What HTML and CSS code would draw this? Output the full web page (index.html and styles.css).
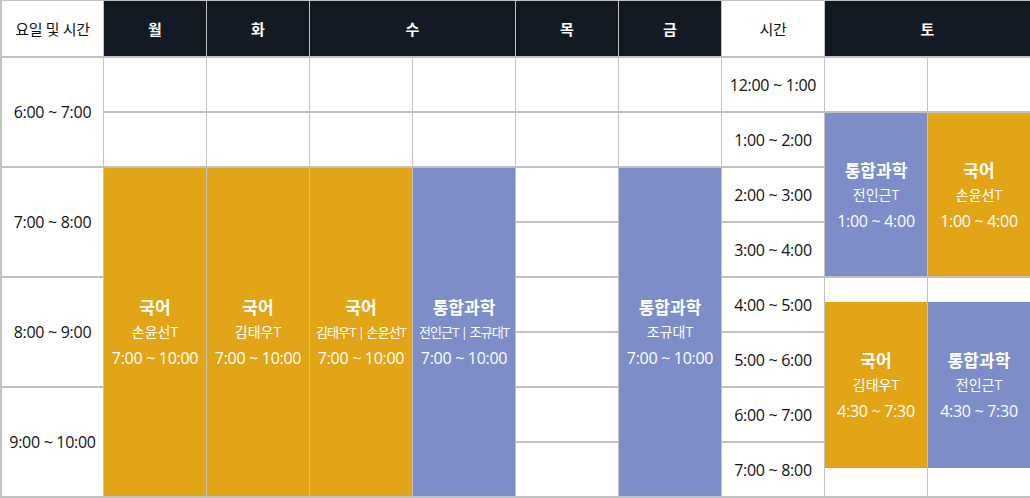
FILE: index.html
```html
<!DOCTYPE html>
<html lang="ko">
<head>
    <meta charset="UTF-8">
    <meta name="viewport" content="width=device-width, initial-scale=1.0">
    <title>시간표</title>
    <link rel="stylesheet" href="styles.css">
</head>
<body>

    <div class="horario">
        <!-- cabecera -->
        <div class="celda etiqueta">요일 및 시간</div>
        <div class="celda dia">월</div>
        <div class="celda dia">화</div>
        <div class="celda dia ancho">수</div>
        <div class="celda dia">목</div>
        <div class="celda dia">금</div>
        <div class="celda etiqueta">시간</div>
        <div class="celda dia ancho">토</div>

        <!-- 12:00 -->
        <div class="celda hora alto2">6:00 ~ 7:00</div>
        <div class="celda"></div>
        <div class="celda"></div>
        <div class="celda"></div>
        <div class="celda"></div>
        <div class="celda"></div>
        <div class="celda"></div>
        <div class="celda hora">12:00 ~ 1:00</div>
        <div class="celda"></div>
        <div class="celda"></div>

        <!-- 1:00 -->
        <div class="celda"></div>
        <div class="celda"></div>
        <div class="celda"></div>
        <div class="celda"></div>
        <div class="celda"></div>
        <div class="celda"></div>
        <div class="celda hora">1:00 ~ 2:00</div>
        <div class="celda clase azul alto3">
            <span class="materia">통합과학</span>
            <span class="profe">전인근T</span>
            <span class="tiempo">1:00 ~ 4:00</span>
        </div>
        <div class="celda clase naranja alto3">
            <span class="materia">국어</span>
            <span class="profe">손윤선T</span>
            <span class="tiempo">1:00 ~ 4:00</span>
        </div>

        <!-- 2:00 -->
        <div class="celda hora alto2">7:00 ~ 8:00</div>
        <div class="celda clase naranja alto6">
            <span class="materia">국어</span>
            <span class="profe">손윤선T</span>
            <span class="tiempo">7:00 ~ 10:00</span>
        </div>
        <div class="celda clase naranja alto6">
            <span class="materia">국어</span>
            <span class="profe">김태우T</span>
            <span class="tiempo">7:00 ~ 10:00</span>
        </div>
        <div class="celda clase naranja alto6">
            <span class="materia">국어</span>
            <span class="profe apretado">김태우T | 손윤선T</span>
            <span class="tiempo">7:00 ~ 10:00</span>
        </div>
        <div class="celda clase azul alto6">
            <span class="materia">통합과학</span>
            <span class="profe apretado">전인근T | 조규대T</span>
            <span class="tiempo">7:00 ~ 10:00</span>
        </div>
        <div class="celda"></div>
        <div class="celda clase azul alto6">
            <span class="materia">통합과학</span>
            <span class="profe">조규대T</span>
            <span class="tiempo">7:00 ~ 10:00</span>
        </div>
        <div class="celda hora">2:00 ~ 3:00</div>

        <!-- 3:00 -->
        <div class="celda"></div>
        <div class="celda hora">3:00 ~ 4:00</div>

        <!-- 4:00 -->
        <div class="celda hora alto2">8:00 ~ 9:00</div>
        <div class="celda"></div>
        <div class="celda hora">4:00 ~ 5:00</div>
        <div class="celda medio alto4">
            <div class="clase naranja">
                <span class="materia">국어</span>
                <span class="profe">김태우T</span>
                <span class="tiempo">4:30 ~ 7:30</span>
            </div>
        </div>
        <div class="celda medio alto4">
            <div class="clase azul">
                <span class="materia">통합과학</span>
                <span class="profe">전인근T</span>
                <span class="tiempo">4:30 ~ 7:30</span>
            </div>
        </div>

        <!-- 5:00 -->
        <div class="celda"></div>
        <div class="celda hora">5:00 ~ 6:00</div>

        <!-- 6:00 -->
        <div class="celda hora alto2">9:00 ~ 10:00</div>
        <div class="celda"></div>
        <div class="celda hora">6:00 ~ 7:00</div>

        <!-- 7:00 -->
        <div class="celda"></div>
        <div class="celda hora">7:00 ~ 8:00</div>
    </div>

</body>
</html>
```

FILE: styles.css
```css
        body {
            margin: 0;
            font-family: "Open Sans", "Noto Sans CJK KR", sans-serif;
            background-color: white;
        }

        .horario {
            display: grid;
            grid-template-columns: 101px repeat(9, 1fr);
            grid-template-rows: 55px repeat(8, 53px);
            column-gap: 1px;
            row-gap: 2px;
            padding: 1px 0 2px 2px;
            background-color: #c2c2c2;
            width: 1028px;
        }

        .celda {
            background-color: white;
            display: flex;
            align-items: center;
            justify-content: center;
            text-align: center;
        }

        .etiqueta {
            color: #111;
            font-size: 15px;
            letter-spacing: -0.3px;
        }

        .dia {
            background-color: #141a24;
            color: white;
            font-size: 15px;
            font-weight: bold;
        }

        .ancho {
            grid-column: span 2;
        }

        .hora {
            color: #111;
            font-size: 16px;
            letter-spacing: -0.3px;
        }

        .alto2 { grid-row: span 2; }
        .alto3 { grid-row: span 3; }
        .alto4 { grid-row: span 4; }
        .alto6 { grid-row: span 6; }

        .clase {
            display: flex;
            flex-direction: column;
            align-items: center;
            justify-content: center;
            color: white;
            padding-top: 2px;
        }

        .naranja {
            background-color: #e2a518;
        }

        .azul {
            background-color: #7c8dc7;
        }

        .materia {
            font-size: 17px;
            font-weight: bold;
            line-height: 22px;
        }

        .profe {
            font-size: 14px;
            line-height: 22px;
            margin-top: 2px;
            white-space: nowrap;
        }

        .apretado {
            font-size: 13px;
            letter-spacing: -0.9px;
        }

        .tiempo {
            font-size: 16px;
            line-height: 22px;
            margin-top: 4px;
            letter-spacing: -0.3px;
        }

        .medio {
            display: flex;
            flex-direction: column;
            align-items: stretch;
            padding: 24px 0 28px;
        }

        .medio .clase {
            flex: 1;
        }
```
